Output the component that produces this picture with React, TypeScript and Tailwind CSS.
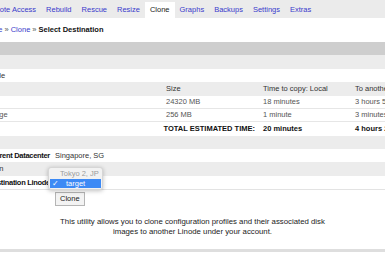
import React from "react";

const link = "text-[#3a3acb]";

function Tab({ label, active }: { label: string; active?: boolean }) {
  return (
    <div
      className={
        "h-[16px] px-[5px] flex items-center whitespace-nowrap " +
        (active ? "bg-white text-[#222]" : link)
      }
    >
      {label}
    </div>
  );
}

export default function App() {
  const tabs = ["Remote Access", "Rebuild", "Rescue", "Resize", "Clone", "Graphs", "Backups", "Settings", "Extras"];
  return (
    <div
      className="w-[385px] h-[253px] overflow-hidden bg-white text-[7.5px] leading-none text-[#222]"
      style={{ fontFamily: '"Liberation Sans", Arial, sans-serif' }}
    >
      <div className="-ml-[40px] w-[465px] flex flex-col">
        {/* tab bar */}
        <div className="h-[18px] bg-[#ebebeb] flex items-end pl-[19px]">
          {tabs.map((t) => (
            <Tab key={t} label={t} active={t === "Clone"} />
          ))}
        </div>
        {/* breadcrumb */}
        <div className="h-[24px] flex items-center pl-[20px] whitespace-nowrap">
          <span className={link}>Linode</span>
          <span className="mx-[2px] text-[#555]">»</span>
          <span className={link}>Clone</span>
          <span className="mx-[2px] text-[#555]">»</span>
          <span className="font-bold text-[#111]">Select Destination</span>
        </div>
        <div className="h-[13px] bg-[#cecece]" />
        <div className="h-[14px] bg-[#ececec]" />
        <div className="h-[13px] flex items-center -ml-[2px] text-[#333] whitespace-nowrap">Source Profile</div>

        {/* table */}
        <div className="grid grid-cols-[200px_97px_92px_76px] pl-[6px] bg-[#ececec] h-[14px] items-center text-[#333] whitespace-nowrap">
          <div>Label</div>
          <div>Size</div>
          <div>Time to copy: Local</div>
          <div>To another Datacenter</div>
        </div>
        <div className="grid grid-cols-[200px_97px_92px_76px] pl-[6px] h-[13px] items-center border-b border-[#e6e6e6] text-[#555] whitespace-nowrap">
          <div>Disk</div>
          <div>24320 MB</div>
          <div>18 minutes</div>
          <div>3 hours 58 minutes</div>
        </div>
        <div className="grid grid-cols-[200px_97px_92px_76px] pl-[6px] h-[13px] items-center border-b border-[#e6e6e6] text-[#555] whitespace-nowrap">
          <div>Swap Image</div>
          <div>256 MB</div>
          <div>1 minute</div>
          <div>3 minutes</div>
        </div>
        <div className="grid grid-cols-[297px_92px_76px] pl-[6px] h-[14px] items-center font-bold text-[#111] whitespace-nowrap">
          <div className="text-right pr-[8px]">TOTAL ESTIMATED TIME:</div>
          <div>20 minutes</div>
          <div>4 hours 22 minutes</div>
        </div>
        <div className="h-[13px] bg-[#ececec]" />

        {/* form */}
        <div className="grid grid-cols-[90px_1fr] gap-x-[5px] h-[13px] items-center whitespace-nowrap">
          <div className="text-right font-bold tracking-[-0.3px] text-[#111]">Current Datacenter</div>
          <div className="text-[#333]">Singapore, SG</div>
        </div>
        <div className="h-[14px] bg-[#ececec] flex items-center pl-[6px] text-[#333]">Destination</div>
        <div className="grid grid-cols-[90px_1fr] gap-x-[5px] h-[14px] items-center border-b border-[#e3e3e3] whitespace-nowrap">
          <div className="text-right font-bold tracking-[-0.3px] text-[#111]">Destination Linode</div>
          <div className="relative h-full">
            <div className="absolute left-[2px] top-[2px] h-[10px] w-[42px] rounded-[2px] border border-[#c8c8c8] bg-[#f4f4f4]" />
            <div className="absolute left-[-7px] top-[-9px] w-[55px] h-[23px] rounded-[3px] bg-[#f2f2f2] border border-[#d6d6d6] shadow-[0_1px_4px_rgba(0,0,0,0.25)] flex flex-col">
              <div className="h-[11px] flex items-center pl-[11px] text-[#9a9a9a]">Tokyo 2, JP</div>
              <div className="h-[9px] mx-[1px] bg-[#3d8af5] flex items-center text-white">
                <span className="w-[16px] pl-[2px]">✓</span>
                <span>target</span>
              </div>
            </div>
          </div>
        </div>
        <div className="grid grid-cols-[90px_1fr] gap-x-[5px] mt-[2px]">
          <div />
          <div>
            <button className="h-[14px] px-[4px] border border-[#b5b5b5] bg-[#f3f3f3] text-[#222] leading-none">
              Clone
            </button>
          </div>
        </div>
        <p className="mt-[11px] text-center text-[7.8px] leading-[10px] text-[#222]">
          This utility allows you to clone configuration profiles and their associated disk
          <br />
          images to another Linode under your account.
        </p>
        <div className="mt-[12px] h-[3px] bg-[#dedede]" />
      </div>
    </div>
  );
}
